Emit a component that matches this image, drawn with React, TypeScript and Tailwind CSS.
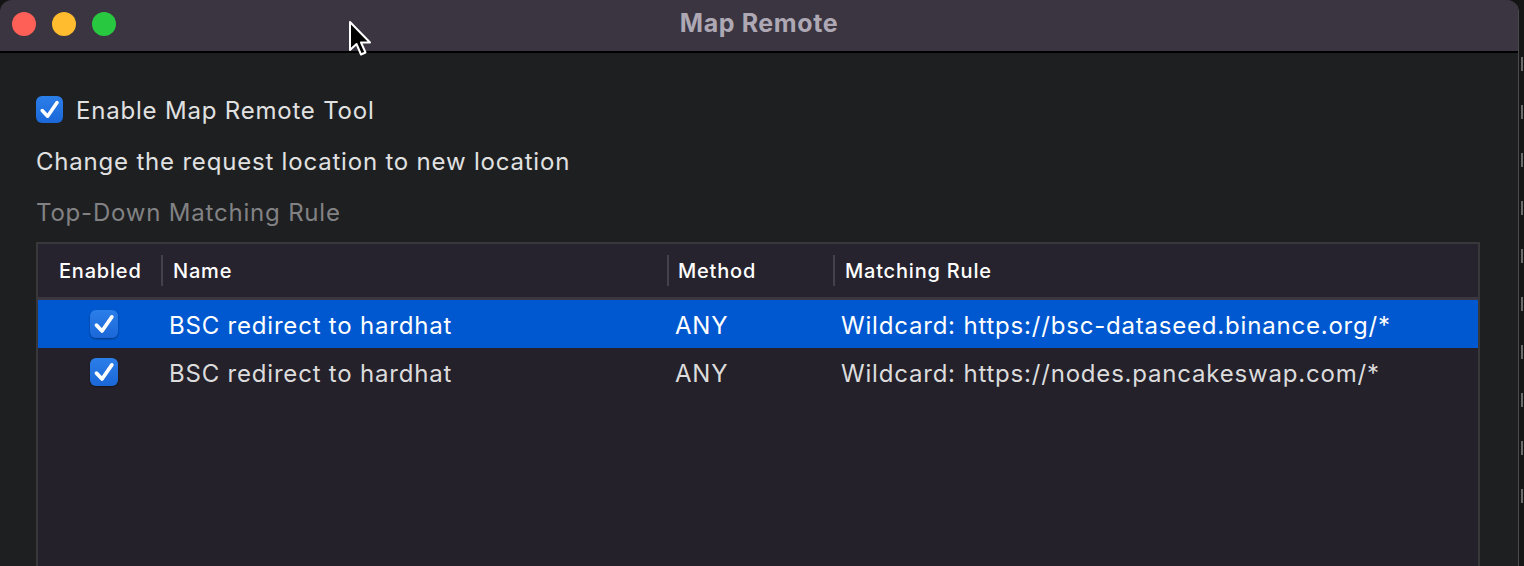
import React from "react";

interface Rule {
  id: number;
  enabled: boolean;
  name: string;
  method: string;
  rule: string;
}

const rules: Rule[] = [
  { id: 1, enabled: true, name: "BSC redirect to hardhat", method: "ANY", rule: "Wildcard: https://bsc-dataseed.binance.org/*" },
  { id: 2, enabled: true, name: "BSC redirect to hardhat", method: "ANY", rule: "Wildcard: https://nodes.pancakeswap.com/*" },
];

function CheckBox({ size }: { size: "sm" | "md" }) {
  return (
    <div
      className={
        size === "sm"
          ? "w-[27px] h-[27px] rounded-[6px] bg-gradient-to-b from-[#2b7fe9] to-[#1b67d8] flex items-center justify-center shrink-0"
          : "w-[28px] h-[28px] rounded-[6px] bg-gradient-to-b from-[#2b7fe9] to-[#1b67d8] flex items-center justify-center shrink-0 shadow-[0_1px_2px_rgba(0,0,0,0.4)]"
      }
    >
      <svg viewBox="0 0 20 20" className="w-full h-full" fill="none">
        <path d="M4.6 10.8 L8.6 15 L15.6 4.9" stroke="white" strokeWidth={2.6} strokeLinecap="round" strokeLinejoin="round" />
      </svg>
    </div>
  );
}

function Divider() {
  return <span className="w-[2px] h-[31px] bg-[#45414c] shrink-0" />;
}

export default function App() {
  return (
    <div className="w-[1524px] h-[566px] bg-[#141414] overflow-hidden flex font-['Inter','Liberation_Sans',sans-serif]">
      {/* Window */}
      <div className="relative w-[1519px] h-full rounded-t-[12px] overflow-hidden flex flex-col bg-[#1e1f21] border-r border-[#4a4a4c]">
        {/* Title bar */}
        <div className="h-[53px] shrink-0 bg-[#3a3541] border-b-2 border-black flex items-center pb-[3px]">
          <div className="w-[140px] flex items-center gap-4 pl-3">
            <span className="w-6 h-6 rounded-full bg-[#fe5f57]" />
            <span className="w-6 h-6 rounded-full bg-[#febc2e]" />
            <span className="w-6 h-6 rounded-full bg-[#28c840]" />
          </div>
          <div className="flex-1 text-center text-[25px] font-bold text-[#aea8b4] tracking-[0.6px]">Map Remote</div>
          <div className="w-[140px]" />
        </div>

        {/* Content */}
        <div className="flex-1 pl-9 pr-[38px] pt-[31px] flex flex-col tracking-[0.8px]">
          <div className="h-[51px] flex items-center gap-[13px]">
            <CheckBox size="sm" />
            <span className="text-[24px] text-[#e1e1e1] pt-[2px]">Enable Map Remote Tool</span>
          </div>
          <div className="h-[51px] flex items-center text-[24px] text-[#e1e1e1] pt-[2px]">Change the request location to new location</div>
          <div className="h-[51px] flex items-center text-[24px] text-[#828284] pt-[2px]">Top-Down Matching Rule</div>

          {/* Table */}
          <div className="mt-[5px] flex-1 border-2 border-b-0 border-[#38383a] bg-[#24212b] flex flex-col">
            <div className="h-[56px] shrink-0 bg-[#27232e] border-b-[3px] border-[#3b3841] grid grid-cols-[123px_506px_166px_1fr] items-center text-[20px] font-medium text-white">
              <div className="pl-[21px]">Enabled</div>
              <div className="flex items-center gap-[10px]">
                <Divider />
                <span>Name</span>
              </div>
              <div className="flex items-center gap-[9px]">
                <Divider />
                <span>Method</span>
              </div>
              <div className="flex items-center gap-[10px]">
                <Divider />
                <span>Matching Rule</span>
              </div>
            </div>

            {rules.map((r, i) => (
              <div
                key={r.id}
                className={
                  i === 0
                    ? "h-[48px] grid grid-cols-[123px_506px_166px_1fr] items-center text-[24px] bg-[#0058d0] text-white"
                    : "h-[48px] grid grid-cols-[123px_506px_166px_1fr] items-center text-[24px] text-[#dcdcdc]"
                }
              >
                <div className="pl-[52px]">
                  <CheckBox size="md" />
                </div>
                <div className="pl-2 pt-[3px]">{r.name}</div>
                <div className="pl-2 pt-[3px]">{r.method}</div>
                <div className="pl-2 pt-[3px]">{r.rule}</div>
              </div>
            ))}
          </div>
        </div>

        {/* Mouse cursor */}
        <svg className="absolute left-[347px] top-[19px] w-[28px] h-[40px]" viewBox="0 0 28 40">
          <path
            d="M3 3 L3 31 L9.5 25 L14 35.5 L18.5 33.5 L14 23.5 L23 23.5 Z"
            fill="black"
            stroke="white"
            strokeWidth={2}
            strokeLinejoin="round"
          />
        </svg>
      </div>

      {/* Edge of next window */}
      <div className="flex-1 bg-[#161616] flex flex-col items-center pt-[57px] gap-[34px]">
        <span className="w-[2px] h-[14px] bg-[#6a6a6a]" />
        <span className="w-[2px] h-[14px] bg-[#6a6a6a]" />
        <span className="w-[2px] h-[14px] bg-[#6a6a6a]" />
        <span className="w-[2px] h-[14px] bg-[#6a6a6a]" />
        <span className="w-[2px] h-[14px] bg-[#6a6a6a]" />
        <span className="w-[2px] h-[14px] bg-[#6a6a6a]" />
        <span className="w-[2px] h-[14px] bg-[#6a6a6a]" />
        <span className="w-[2px] h-[14px] bg-[#6a6a6a]" />
        <span className="w-[2px] h-[14px] bg-[#6a6a6a]" />
        <span className="w-[2px] h-[14px] bg-[#6a6a6a]" />
      </div>
    </div>
  );
}
